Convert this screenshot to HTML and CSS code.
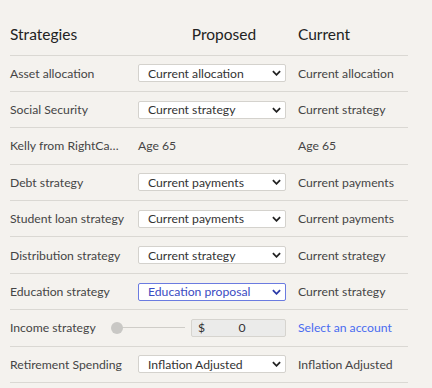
FILE: index.html
```html
<!DOCTYPE html>
<html lang="en">
<head>
  <meta charset="UTF-8" />
  <title>Strategies</title>
  <link rel="stylesheet" href="styles.css">
</head>
<body>
  <div class="strategies">
    <div class="row head">
      <div class="col-name">Strategies</div>
      <div class="col-proposed">Proposed</div>
      <div class="col-current">Current</div>
    </div>

    <div class="row">
      <div class="col-name">Asset allocation</div>
      <div class="col-proposed">
        <div class="select"><span>Current allocation</span><svg class="chev" viewBox="0 0 10 6"><path d="M1 1l4 4 4-4"/></svg></div>
      </div>
      <div class="col-current">Current allocation</div>
    </div>

    <div class="row">
      <div class="col-name">Social Security</div>
      <div class="col-proposed">
        <div class="select"><span>Current strategy</span><svg class="chev" viewBox="0 0 10 6"><path d="M1 1l4 4 4-4"/></svg></div>
      </div>
      <div class="col-current">Current strategy</div>
    </div>

    <div class="row">
      <div class="col-name">Kelly from RightCa…</div>
      <div class="col-proposed">Age 65</div>
      <div class="col-current">Age 65</div>
    </div>

    <div class="row">
      <div class="col-name">Debt strategy</div>
      <div class="col-proposed">
        <div class="select"><span>Current payments</span><svg class="chev" viewBox="0 0 10 6"><path d="M1 1l4 4 4-4"/></svg></div>
      </div>
      <div class="col-current">Current payments</div>
    </div>

    <div class="row">
      <div class="col-name">Student loan strategy</div>
      <div class="col-proposed">
        <div class="select"><span>Current payments</span><svg class="chev" viewBox="0 0 10 6"><path d="M1 1l4 4 4-4"/></svg></div>
      </div>
      <div class="col-current">Current payments</div>
    </div>

    <div class="row">
      <div class="col-name">Distribution strategy</div>
      <div class="col-proposed">
        <div class="select"><span>Current strategy</span><svg class="chev" viewBox="0 0 10 6"><path d="M1 1l4 4 4-4"/></svg></div>
      </div>
      <div class="col-current">Current strategy</div>
    </div>

    <div class="row">
      <div class="col-name">Education strategy</div>
      <div class="col-proposed">
        <div class="select active"><span>Education proposal</span><svg class="chev" viewBox="0 0 10 6"><path d="M1 1l4 4 4-4"/></svg></div>
      </div>
      <div class="col-current">Current strategy</div>
    </div>

    <div class="row">
      <div class="col-name">Income strategy</div>
      <div class="col-proposed income">
        <div class="slider"><span class="thumb"></span></div>
        <div class="amount"><span class="cur">$</span><span class="val">0</span></div>
      </div>
      <div class="col-current"><a class="link">Select an account</a></div>
    </div>

    <div class="row">
      <div class="col-name">Retirement Spending</div>
      <div class="col-proposed">
        <div class="select"><span>Inflation Adjusted</span><svg class="chev" viewBox="0 0 10 6"><path d="M1 1l4 4 4-4"/></svg></div>
      </div>
      <div class="col-current">Inflation Adjusted</div>
    </div>
  </div>
</body>
</html>
```

FILE: styles.css
```css
/* General reset */
* {
  margin: 0;
  padding: 0;
  box-sizing: border-box;
}

body {
  font-family: 'Lato', 'Open Sans', sans-serif;
  background-color: #f4f2ee;
  color: #454545;
  font-size: 12.2px;
  padding-left: 10px;
}

.strategies {
  width: 398px;
}

/* Rows */
.row {
  display: grid;
  grid-template-columns: 128px 160px 1fr;
  align-items: center;
  height: 36.4px;
  border-bottom: 1px solid #dad8d3;
}
.row.head {
  height: 55.5px;
  padding-top: 14px;
  font-size: 15.5px;
  color: #222;
}
.row.head .col-proposed {
  text-align: center;
  padding-left: 12px;
}

.col-name {
  white-space: nowrap;
}

/* Fake select box */
.select {
  display: flex;
  align-items: center;
  justify-content: space-between;
  width: 148px;
  height: 18px;
  padding: 0 4px 0 9px;
  background: #fff;
  border: 1px solid #d4d2cd;
  border-radius: 2px;
  color: #333;
}
.select.active {
  border-color: #6b7be0;
  color: #3b4bc2;
}
.chev {
  width: 9px;
  height: 6px;
  fill: none;
  stroke: #222;
  stroke-width: 2;
}
.select.active .chev {
  stroke: #2b3aa8;
}

/* Income row */
.income {
  display: flex;
  align-items: center;
}
.slider {
  position: relative;
  width: 68px;
  height: 1px;
  background: #cfcdc8;
  margin-left: -21px;
}
.thumb {
  position: absolute;
  left: -6px;
  top: -5.5px;
  width: 12px;
  height: 12px;
  border-radius: 50%;
  background: #c9c8c5;
}
.amount {
  display: flex;
  align-items: center;
  width: 95px;
  height: 18px;
  margin-left: 6px;
  padding-left: 6px;
  background: #ebebea;
  border: 1px solid #d6d4cf;
  border-radius: 2px;
  color: #333;
}
.amount .val {
  flex: 1;
  text-align: center;
  padding-right: 6px;
}

.link {
  color: #4a6cf0;
  text-decoration: none;
}
```
